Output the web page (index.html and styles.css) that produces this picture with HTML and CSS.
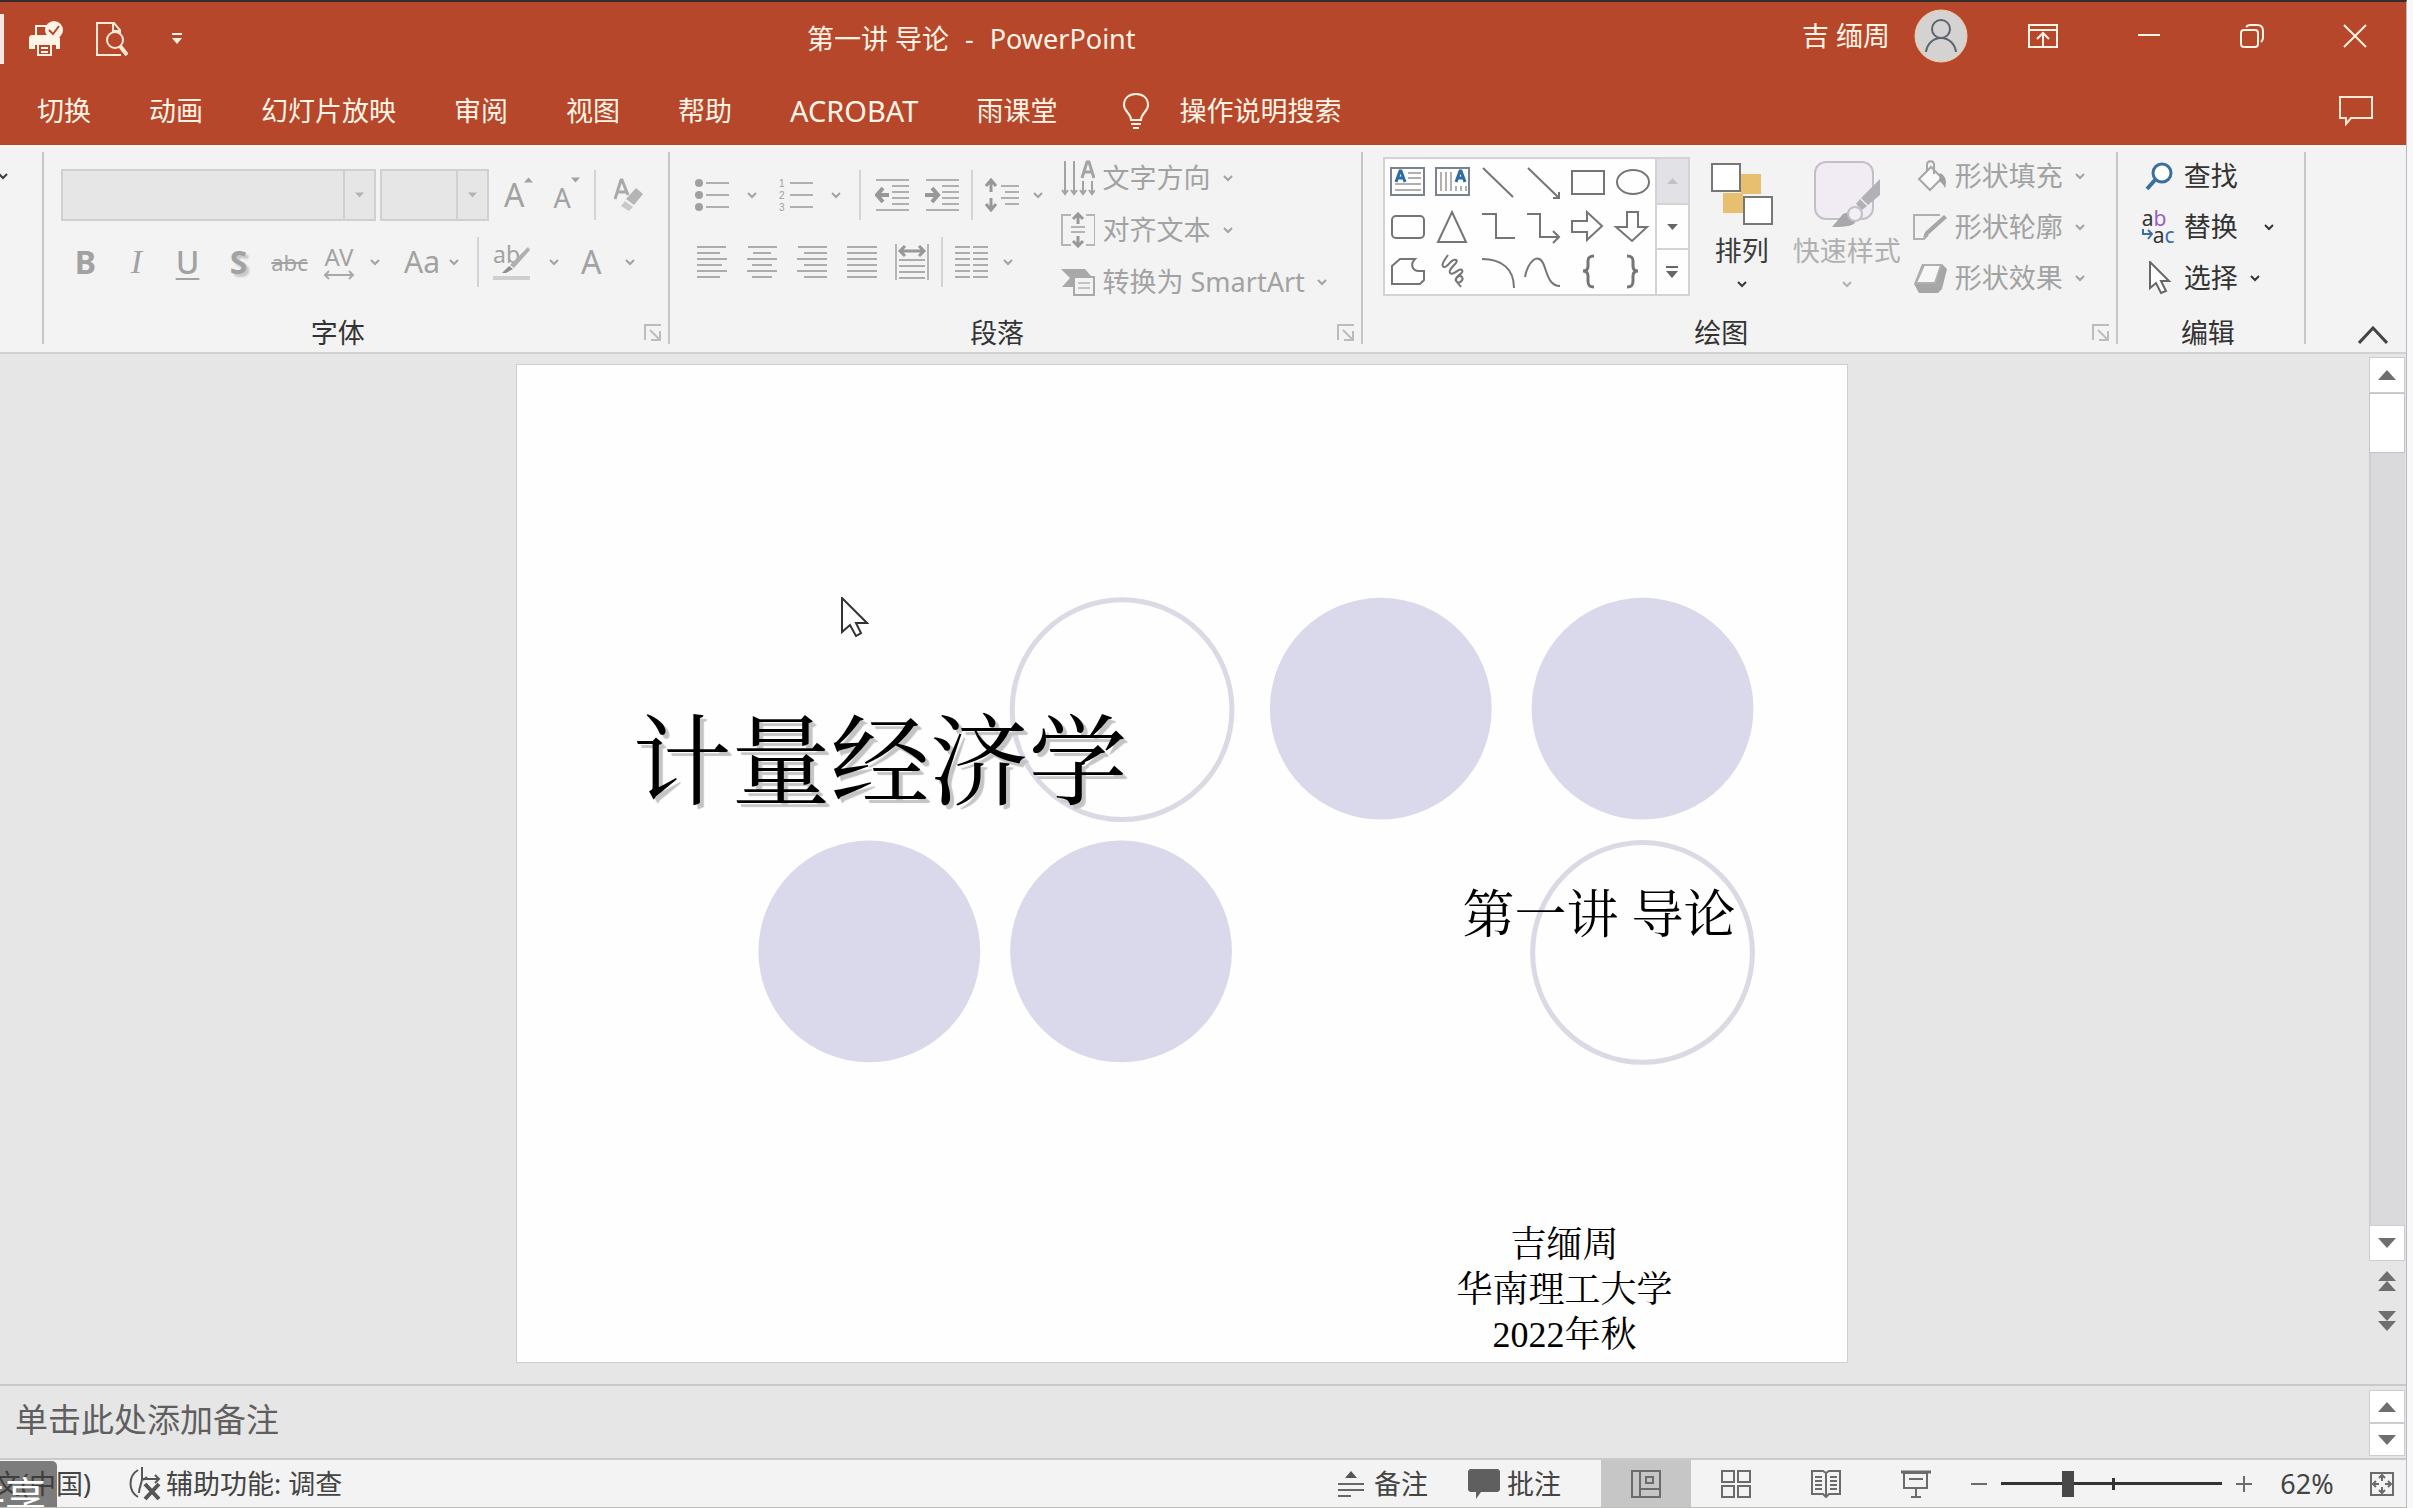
FILE: index.html
```html
<!DOCTYPE html>
<html lang="zh-CN">
<head>
<meta charset="utf-8">
<title>第一讲 导论 - PowerPoint</title>
<link rel="stylesheet" href="styles.css">
</head>
<body>
<svg class="defs" aria-hidden="true">
  <symbol id="chev" viewBox="0 0 10 8"><path d="M1 2l4 4 4-4" fill="none" stroke="currentColor" stroke-width="2"/></symbol>
  <symbol id="up" viewBox="0 0 18 10"><path d="M0 10L9 0l9 10z" fill="currentColor"/></symbol>
  <symbol id="down" viewBox="0 0 18 10"><path d="M0 0h18L9 10z" fill="currentColor"/></symbol>
  <symbol id="launch" viewBox="0 0 18 18"><path d="M1 16V1h16M6 6l9 9M16 7v9H7" fill="none" stroke="currentColor" stroke-width="2"/></symbol>
</svg>
<div class="app">
  <header class="header">
    <div class="titlebar">
      <div class="quick">
        <span class="quick-edge"></span>
        <button class="bare" aria-label="快速打印"><svg width="34" height="36" viewBox="0 0 34 36"><path fill="#fff4e6" d="M0 16l2-2h26l3 3v11h-4v-4H6v4H0z"/><path d="M7 15V5h12M7 15h14" fill="none" stroke="#fff4e6" stroke-width="2"/><path d="M9 23h13v11H9z" fill="#b7472a" stroke="#fff4e6" stroke-width="2"/><path d="M12 27h7M12 31h7" stroke="#fff4e6" stroke-width="2"/><circle cx="25" cy="9" r="9" fill="#fff4e6"/><path d="M20 9l4 4 6-8" fill="none" stroke="#b7472a" stroke-width="2"/></svg></button>
        <button class="bare" aria-label="打印预览"><svg width="32" height="34" viewBox="0 0 32 34" fill="none" stroke="#ffe9d6" stroke-width="2"><path d="M12 33H1V1h17l6 7v3M17 1v8h7M12 33h13"/><circle cx="19" cy="18" r="8"/><path d="M24 24l7 9" stroke-width="4"/></svg></button>
        <button class="bare" aria-label="自定义快速访问工具栏"><svg width="10" height="12" viewBox="0 0 10 12" fill="#fff4e6"><path d="M0 0h10v2H0zM0 5h10l-5 6z"/></svg></button>
      </div>
      <h1 class="doc-title">第一讲 导论<span>-</span>PowerPoint</h1>
      <div class="window">
        <button class="user">吉 缅周<svg width="54" height="54" viewBox="0 0 54 54"><circle cx="27" cy="27" r="26" fill="#d4d3d2" stroke="#f0c9a8" stroke-width="1"/><g fill="none" stroke="#5b6470" stroke-width="2"><circle cx="27" cy="20" r="9"/><path d="M12 43c1-8 7-14 15-14s14 6 15 14"/></g></svg></button>
        <button class="bare win" aria-label="功能区显示选项"><svg width="30" height="24" viewBox="0 0 30 24" fill="none" stroke="#fff4e6" stroke-width="2"><path d="M1 1h28v22H1zM1 6h28M15 22V10M9 15l6-6 6 6"/></svg></button>
        <button class="bare win" aria-label="最小化"><svg width="24" height="24" viewBox="0 0 24 24"><path d="M1 11h22" stroke="#fff4e6" stroke-width="2"/></svg></button>
        <button class="bare win" aria-label="还原"><svg width="24" height="24" viewBox="0 0 24 24" fill="none" stroke="#fff4e6" stroke-width="2"><rect x="1" y="6" width="17" height="17" rx="3"/><path d="M6 3c1-1 2-2 4-2h7c4 0 6 2 6 6v7c0 2-1 3-2 4"/></svg></button>
        <button class="bare win" aria-label="关闭"><svg width="24" height="24" viewBox="0 0 24 24"><path d="M1 1l22 22M23 1L1 23" stroke="#fff4e6" stroke-width="2"/></svg></button>
      </div>
    </div>
    <nav class="tabs">
      <button>切换</button><button>动画</button><button>幻灯片放映</button><button>审阅</button><button>视图</button><button>帮助</button><button class="latin">ACROBAT</button><button>雨课堂</button>
      <label class="tell">
        <svg width="26" height="36" viewBox="0 0 26 36" fill="none" stroke="#fff4e6" stroke-width="2"><path d="M8 27c0-7-7-8-7-15C1 5 6 1 13 1s12 4 12 11c0 7-7 8-7 15zM8 31h10M10 35h6"/></svg>
        <input type="text" placeholder="操作说明搜索" aria-label="操作说明搜索">
      </label>
      <button class="bare comments" aria-label="批注"><svg width="34" height="30" viewBox="0 0 34 30" fill="none" stroke="#ffe9d6" stroke-width="2"><path d="M1 1h32v21H12l-5 6v-6H1z"/></svg></button>
    </nav>
  </header>

  <section class="ribbon">
    <div class="group edge"><svg class="chev dark"><use href="#chev"/></svg></div>

    <div class="group font">
      <div class="body rows">
        <div class="row">
          <span class="combo name"><select disabled aria-label="字体"><option></option></select><svg><use href="#down"/></svg></span>
          <span class="combo size"><select disabled aria-label="字号"><option></option></select><svg><use href="#down"/></svg></span>
          <button class="tool grow" disabled aria-label="增大字号"><span class="big">A</span><svg width="9" height="6"><use href="#up"/></svg></button>
          <button class="tool shrink" disabled aria-label="减小字号"><span>A</span><svg width="9" height="6"><use href="#down"/></svg></button>
          <i class="sep"></i>
          <button class="tool clear" disabled aria-label="清除格式"><svg width="30" height="34" viewBox="0 0 30 34"><path d="M1 21L7 2h1l6 15M4 14h8" fill="none" stroke="#a9a9a9" stroke-width="3"/><path d="M22 10l7 6-9 11-8-6z" fill="#b5b5b5"/><path d="M11 23l8 6-4 4-8-5z" fill="#c9c9c9"/></svg></button>
        </div>
        <div class="row">
          <button class="tool fmt" disabled><b>B</b></button>
          <button class="tool fmt" disabled><i class="ital">I</i></button>
          <button class="tool fmt" disabled><u>U</u></button>
          <button class="tool fmt" disabled><b class="shadow">S</b></button>
          <button class="tool fmt" disabled><s>abc</s></button>
          <button class="tool split kern" disabled><span class="av">AV<svg width="32" height="10" viewBox="0 0 32 10" fill="none" stroke="#a9a9a9" stroke-width="2"><path d="M2 5h28M6 1L2 5l4 4M26 1l4 4-4 4"/></svg></span><svg class="chev"><use href="#chev"/></svg></button>
          <button class="tool split aa" disabled>Aa<svg class="chev"><use href="#chev"/></svg></button>
          <i class="sep"></i>
          <button class="tool split wide" disabled aria-label="突出显示"><span class="hl">ab<svg width="38" height="37" viewBox="0 0 38 37"><path d="M35 2l2 3-16 18-4-3z" fill="#b0b0b0"/><path d="M16 21l4 3-7 4H9z" fill="#8f8f8f"/><path d="M0 31h37v4H0z" fill="#cfcfcf"/></svg></span><svg class="chev"><use href="#chev"/></svg></button>
          <button class="tool split wider" disabled><span class="big">A</span><svg class="chev"><use href="#chev"/></svg></button>
        </div>
      </div>
      <footer><span>字体</span><button class="bare" aria-label="字体设置"><svg width="18" height="18"><use href="#launch"/></svg></button></footer>
    </div>

    <div class="group para">
      <div class="body cols">
        <div class="rows">
          <div class="row">
            <button class="tool split wide" disabled aria-label="项目符号"><svg width="34" height="32" viewBox="0 0 34 32"><g fill="#a0a0a0"><circle cx="4" cy="4" r="4"/><circle cx="4" cy="16" r="4"/><circle cx="4" cy="28" r="4"/></g><path d="M11 4h23M11 16h23M11 28h23" stroke="#b0b0b0" stroke-width="2"/></svg><svg class="chev"><use href="#chev"/></svg></button>
            <button class="tool split wide" disabled aria-label="编号"><svg class="nums" width="34" height="34" viewBox="0 0 34 34"><text x="0" y="9">1</text><text x="0" y="21">2</text><text x="0" y="33">3</text><path d="M11 5h23M11 17h23M11 29h23" stroke="#b0b0b0" stroke-width="2"/></svg><svg class="chev"><use href="#chev"/></svg></button>
            <i class="sep"></i>
            <button class="tool ind" disabled aria-label="减少缩进"><svg width="34" height="34" viewBox="0 0 34 34"><path d="M1 2h33M17 8h17M17 14h17M17 20h17M17 26h17M1 32h33" stroke="#b0b0b0" stroke-width="2"/><path d="M8 10l-6 7 6 7M2 17h12" fill="none" stroke="#989898" stroke-width="4"/></svg></button>
            <button class="tool ind" disabled aria-label="增加缩进"><svg width="34" height="34" viewBox="0 0 34 34"><path d="M1 2h33M17 8h17M17 14h17M17 20h17M17 26h17M1 32h33" stroke="#b0b0b0" stroke-width="2"/><path d="M7 10l6 7-6 7M0 17h12" fill="none" stroke="#989898" stroke-width="4"/></svg></button>
            <i class="sep"></i>
            <button class="tool split" disabled aria-label="行距"><svg width="34" height="34" viewBox="0 0 34 34"><path d="M16 8h18M20 14h14M16 20h18M20 26h14" stroke="#b0b0b0" stroke-width="2"/><path d="M6 2v12M1 8l5-6 5 6M6 20v12M1 26l5 6 5-6" fill="none" stroke="#989898" stroke-width="3"/></svg><svg class="chev"><use href="#chev"/></svg></button>
          </div>
          <div class="row">
            <button class="tool fmt" disabled aria-label="左对齐"><svg width="30" height="32" viewBox="0 0 30 32"><path d="M0 1h29M0 7h23M0 13h30M0 19h25M0 25h30M0 31h23" stroke="#acacac" stroke-width="2"/></svg></button>
            <button class="tool fmt" disabled aria-label="居中"><svg width="30" height="32" viewBox="0 0 30 32"><path d="M1 1h29M6 7h18M0 13h30M5 19h20M0 25h30M5 31h20" stroke="#acacac" stroke-width="2"/></svg></button>
            <button class="tool fmt" disabled aria-label="右对齐"><svg width="30" height="32" viewBox="0 0 30 32"><path d="M1 1h29M7 7h23M0 13h30M7 19h23M0 25h30M7 31h23" stroke="#acacac" stroke-width="2"/></svg></button>
            <button class="tool fmt" disabled aria-label="两端对齐"><svg width="30" height="32" viewBox="0 0 30 32"><path d="M0 1h30M0 7h30M0 13h30M0 19h30M0 25h30M0 31h30" stroke="#acacac" stroke-width="2"/></svg></button>
            <button class="tool fmt" disabled aria-label="分散对齐"><svg width="34" height="36" viewBox="0 0 34 36"><path d="M1 0v36M33 0v36" stroke="#b5b5b5" stroke-width="2"/><path d="M4 16h26M4 22h26M4 28h26M4 34h26" stroke="#acacac" stroke-width="2"/><path d="M10 2L5 7l5 5M24 2l5 5-5 5M6 7h22" fill="none" stroke="#989898" stroke-width="3"/></svg></button>
            <i class="sep near"></i>
            <button class="tool split" disabled aria-label="分栏"><svg width="34" height="32" viewBox="0 0 34 32"><path d="M0 1h15M18 1h15M0 7h15M18 7h15M0 13h15M18 13h15M0 19h15M18 19h15M0 25h15M18 25h15M0 31h15M18 31h15" stroke="#acacac" stroke-width="2"/></svg><svg class="chev"><use href="#chev"/></svg></button>
          </div>
        </div>
        <div class="stack">
          <button class="item" disabled><svg width="34" height="36" viewBox="0 0 34 36"><path d="M4 1v33M1 30l3 4 3-4M13 1v33M10 30l3 4 3-4M22 21v13M19 30l3 4 3-4M31 21v13M28 30l3 4 3-4" fill="none" stroke="#a3a3a3" stroke-width="2"/><path d="M21 18l5-16h2l5 16M22 12h10" fill="none" stroke="#a3a3a3" stroke-width="3"/></svg><span>文字方向</span><svg class="chev"><use href="#chev"/></svg></button>
          <button class="item" disabled><svg width="34" height="36" viewBox="0 0 34 36"><path d="M10 3H1v30h9M25 3h9v30h-9M10 15h14M10 20h14" fill="none" stroke="#b5b5b5" stroke-width="2"/><path d="M17 2v10M12 7l5-5 5 5M17 24v10M12 29l5 5 5-5" fill="none" stroke="#989898" stroke-width="3"/></svg><span>对齐文本</span><svg class="chev"><use href="#chev"/></svg></button>
          <button class="item" disabled><svg width="34" height="28" viewBox="0 0 34 28"><path d="M0 1h24l6 7H15v11H1l8-9z" fill="#a8a8a8"/><path d="M13 9h20v18H13z" fill="#f3f3f3" stroke="#a8a8a8" stroke-width="2"/><path d="M17 15h12M17 20h12" stroke="#c4c4c4" stroke-width="2"/></svg><span>转换为 SmartArt</span><svg class="chev"><use href="#chev"/></svg></button>
        </div>
      </div>
      <footer><span>段落</span><button class="bare" aria-label="段落设置"><svg width="18" height="18"><use href="#launch"/></svg></button></footer>
    </div>

    <div class="group draw">
      <div class="body cols">
        <div class="gallery">
          <div class="shapes">
            <svg viewBox="0 0 45 45"><path d="M6 9h33v27H6z" stroke="#7a8190"/><path d="M23 14h13M23 19h13M10 25h26M10 31h26" stroke="#b0b0b0"/><path d="M11 23l4-11h1l4 11M12 19h7" stroke="#2e6ca4" stroke-width="3"/></svg>
            <svg viewBox="0 0 45 45"><path d="M6 9h33v27H6z" stroke="#7a8190"/><path d="M11 13v19M16 13v19M21 13v19M26 27v5M31 27v5M36 27v5" stroke="#b0b0b0"/><path d="M26 23l4-11h1l4 11M27 19h7" stroke="#2e6ca4" stroke-width="3"/></svg>
            <svg viewBox="0 0 45 45"><path d="M8 9l30 29"/></svg>
            <svg viewBox="0 0 45 45"><path d="M8 9l31 30M39 33v6h-6"/></svg>
            <svg viewBox="0 0 45 45"><path d="M7 12h32v23H7z"/></svg>
            <svg viewBox="0 0 45 45"><ellipse cx="23" cy="23" rx="16" ry="12"/></svg>
            <svg viewBox="0 0 45 45"><rect x="7" y="12" width="32" height="22" rx="4"/></svg>
            <svg viewBox="0 0 45 45"><path d="M22 8l14 30H8z"/></svg>
            <svg viewBox="0 0 45 45"><path d="M7 10h14v24h19"/></svg>
            <svg viewBox="0 0 45 45"><path d="M7 10h13v23h19M33 27l6 6-6 6"/></svg>
            <svg viewBox="0 0 45 45"><path d="M7 17h15V8l15 14-15 14v-8H7z"/></svg>
            <svg viewBox="0 0 45 45"><path d="M17 8h11v15h9L22 37 6 23h11z"/></svg>
            <svg viewBox="0 0 45 45"><path d="M7 17l8-7h15c-5 5-3 12 4 12h5v9l-4 4H7z"/></svg>
            <svg viewBox="0 0 45 45"><path d="M18 6c-3 4-8 11-4 12s7-9 12-7c4 2-9 9-6 13s9-6 12-3-9 7-6 11 8-1 6-4-8 1-5 5l4 5"/></svg>
            <svg viewBox="0 0 45 45"><path d="M7 10c20 0 32 10 32 29"/></svg>
            <svg viewBox="0 0 45 45"><path d="M5 28c3-16 13-24 18-14 4 8 5 23 17 23"/></svg>
            <svg viewBox="0 0 45 45"><path d="M29 7c-5 0-6 2-6 5v5c0 4-2 5-5 5 3 0 5 1 5 5v5c0 4 1 6 6 6" stroke-width="3"/></svg>
            <svg viewBox="0 0 45 45"><path d="M17 7c5 0 6 2 6 5v5c0 4 2 5 5 5-3 0-5 1-5 5v5c0 4-1 6-6 6" stroke-width="3"/></svg>
          </div>
          <div class="gal-scroll">
            <button disabled aria-label="上一行"><svg width="11" height="6"><use href="#up"/></svg></button>
            <button aria-label="下一行"><svg width="11" height="6"><use href="#down"/></svg></button>
            <button aria-label="其他"><svg width="12" height="12" viewBox="0 0 12 12"><path d="M0 0h12v2H0zM0 5h12l-6 7z" fill="currentColor"/></svg></button>
          </div>
        </div>
        <button class="large arrange"><svg width="62" height="66" viewBox="0 0 62 66"><path d="M30 13h20v20H30zM12 32h20v20H12z" fill="#e7bf6e"/><g fill="#fff" stroke="#777" stroke-width="2"><path d="M1 3h28v27H1zM33 36h28v27H33z"/></g></svg><span>排列</span><svg class="chev"><use href="#chev"/></svg></button>
        <button class="large styles" disabled><svg width="68" height="66" viewBox="0 0 68 66"><rect x="2" y="1" width="58" height="57" rx="11" fill="#f1ecf4" stroke="#c3bfc8" stroke-width="2"/><path d="M67 18v16L55 44l-7-7zM47 38l7 7-5 4-6-6z" fill="#b3b1b5"/><path d="M19 66l11-13c6-4 15 0 13 6-1 6-8 7-24 7z" fill="#a9a7ab"/><circle cx="42" cy="53" r="7" fill="#f1f0f2" stroke="#c3bfc8" stroke-width="2"/></svg><span>快速样式</span><svg class="chev"><use href="#chev"/></svg></button>
        <div class="stack tight">
          <button class="item" disabled><svg width="34" height="32" viewBox="0 0 34 32"><path d="M18 7l11 11-12 12L6 19z" fill="#fafafa" stroke="#a6a6a6" stroke-width="2"/><path d="M14 11V5c0-5 7-5 7 0v9" fill="none" stroke="#a6a6a6" stroke-width="2"/><path d="M27 13c6 3 7 8 5 15-2-4-4-6-6-7z" fill="#a0a0a0"/></svg><span>形状填充</span><svg class="chev"><use href="#chev"/></svg></button>
          <button class="item" disabled><svg width="34" height="32" viewBox="0 0 34 32"><path d="M27 4H1v24h10l4-4" fill="none" stroke="#b0b0b0" stroke-width="2"/><path d="M31 4l3 3-19 17-5 3 2-6z" fill="#a6a6a6"/></svg><span>形状轮廓</span><svg class="chev"><use href="#chev"/></svg></button>
          <button class="item" disabled><svg width="34" height="32" viewBox="0 0 34 32"><path d="M1 22L9 2h20l5 5-5 20-4 4H6z" fill="#a6a6a6"/><path d="M11 3h17l-6 18H3z" fill="#f7f7f7" stroke="#b0b0b0" stroke-width="2"/></svg><span>形状效果</span><svg class="chev"><use href="#chev"/></svg></button>
        </div>
      </div>
      <footer><span>绘图</span><button class="bare" aria-label="形状设置"><svg width="18" height="18"><use href="#launch"/></svg></button></footer>
    </div>

    <div class="group edit">
      <div class="body stack tight">
        <button class="item"><svg width="34" height="30" viewBox="0 0 34 30"><circle cx="20" cy="12" r="9" fill="#fff" stroke="#3a6f9f" stroke-width="3"/><path d="M13 19L5 28" stroke="#3a6f9f" stroke-width="4"/></svg><span>查找</span></button>
        <button class="item replace"><span class="rep"><span>a<em>b</em></span><span><svg width="11" height="12" viewBox="0 0 11 12"><path d="M1 0v5h8M6 1l4 4-4 5" fill="none" stroke="#3a6f9f" stroke-width="2"/></svg>a<q>c</q></span></span><span>替换</span><svg class="chev"><use href="#chev"/></svg></button>
        <button class="item"><svg width="34" height="34" viewBox="0 0 34 34"><path d="M8 1v26l6-5 5 10 5-2-5-10h8z" fill="#fff" stroke="#666" stroke-width="2"/></svg><span>选择</span><svg class="chev"><use href="#chev"/></svg></button>
      </div>
      <footer><span>编辑</span></footer>
    </div>
    <div class="group last"><button class="bare" aria-label="折叠功能区"><svg width="30" height="18" viewBox="0 0 30 18"><path d="M1 17L15 2l14 15" fill="none" stroke="#444" stroke-width="3"/></svg></button></div>
  </section>

  <main class="work">
    <div class="stage">
      <article class="slide">
        <svg class="art" viewBox="0 0 1330 998">
          <g fill="#dad8eb"><circle cx="864" cy="344" r="111"/><circle cx="1126" cy="344" r="111"/><circle cx="352" cy="587" r="111"/><circle cx="604" cy="587" r="111"/></g>
          <g fill="none" stroke="#dad9e4" stroke-width="5"><circle cx="605" cy="345" r="110"/><circle cx="1126" cy="588" r="110"/></g>
        </svg>
        <h2>计量经济学</h2>
        <p class="sub">第一讲 导论</p>
        <p class="by">吉缅周<br>华南理工大学<br>2022年秋</p>
        <svg class="pointer" width="28" height="40" viewBox="0 0 28 40"><path d="M1 1v34l8-7 6 11 5-3-5-10h11z" fill="#fff" stroke="#333" stroke-width="2"/></svg>
      </article>
    </div>
    <div class="vscroll">
      <button aria-label="向上滚动"><svg width="18" height="10"><use href="#up"/></svg></button>
      <div class="track"><div class="thumb"></div></div>
      <button aria-label="向下滚动"><svg width="18" height="10"><use href="#down"/></svg></button>
      <button class="page" aria-label="上一张幻灯片"><svg width="18" height="10"><use href="#up"/></svg><svg width="18" height="10"><use href="#up"/></svg></button>
      <button class="page" aria-label="下一张幻灯片"><svg width="18" height="10"><use href="#down"/></svg><svg width="18" height="10"><use href="#down"/></svg></button>
    </div>
  </main>

  <section class="notes">
    <textarea rows="1" placeholder="单击此处添加备注" aria-label="备注"></textarea>
    <div class="nscroll">
      <button aria-label="备注向上滚动"><svg width="18" height="10"><use href="#up"/></svg></button>
      <button aria-label="备注向下滚动"><svg width="18" height="10"><use href="#down"/></svg></button>
    </div>
  </section>

  <footer class="status">
    <button class="lang">中文(中国)</button>
    <button class="access"><svg width="32" height="33" viewBox="0 0 32 33" fill="none" stroke="#555" stroke-width="2"><path d="M9 3C-1 9-1 24 9 30M13 0v12c0 4-3 8-3 14M13 12h17M26 8l4 4-4 4M18 10l-4 3"/><path d="M16 17l14 15M30 17L16 32" stroke-width="4"/></svg>辅助功能: 调查</button>
    <button class="toggle notes-toggle"><svg width="28" height="26" viewBox="0 0 28 26"><path d="M8 7l6-7 6 7z" fill="#555"/><path d="M1 13h26M1 19h26M1 25h13" stroke="#666" stroke-width="2"/></svg>备注</button>
    <button class="toggle cm-toggle"><svg width="32" height="30" viewBox="0 0 32 30"><path d="M2 0h28l2 2v19l-2 2H13l-5 7v-7H2l-2-2V2z" fill="#5f5f5f"/></svg>批注</button>
    <div class="views">
      <button class="on" aria-label="普通视图"><svg width="30" height="28" viewBox="0 0 30 28"><path d="M1 1h28v26H1zM9 1v26M9 19h20M15 7h7v6h-7z"/></svg></button>
      <button aria-label="幻灯片浏览"><svg width="30" height="28" viewBox="0 0 30 28"><path d="M1 1h12v11H1zM17 1h12v11H17zM1 16h12v11H1zM17 16h12v11H17z"/></svg></button>
      <button aria-label="阅读视图"><svg width="30" height="28" viewBox="0 0 30 28"><path d="M15 3L12 1H1v23h11l3 3 3-3h11V1H18zv24M4 7h7M4 11h7M4 15h7M4 19h7M19 7h7M19 11h7M19 15h7M19 19h7"/></svg></button>
      <button aria-label="幻灯片放映"><svg width="30" height="28" viewBox="0 0 30 28"><path d="M0 2h30" stroke-width="3"/><path d="M3 3h23v15H3zM8 9h14M15 18v9M10 27h10"/></svg></button>
    </div>
    <div class="zoom">
      <button aria-label="缩小"><svg width="18" height="18" viewBox="0 0 18 18"><path d="M1 9h16"/></svg></button>
      <span class="range"><input type="range" min="0" max="100" value="29" aria-label="缩放"></span>
      <button aria-label="放大"><svg width="18" height="18" viewBox="0 0 18 18"><path d="M1 9h16M9 1v16"/></svg></button>
      <button class="pct">62%</button>
      <button aria-label="适应窗口"><svg width="24" height="24" viewBox="0 0 24 24"><path d="M1 1h22v22H1zM12 3v6M9 6l3-3 3 3M12 21v-6M9 18l3 3 3-3M3 12h6M6 9l-3 3 3 3M21 12h-6M18 9l3 3-3 3"/></svg></button>
    </div>
  </footer>
  <div class="share">共享</div>
</div>
</body>
</html>
```
FILE: styles.css
```css
* { box-sizing: border-box; }
body {
  margin: 0;
  padding-right: 6px;
  background: #f8f8fa;
  color: #3b3b3b;
  font: 27px/36px "Noto Sans", "Noto Sans CJK SC", sans-serif;
}
button, input, textarea, select { font: inherit; color: inherit; border: 0; padding: 0; margin: 0; background: none; border-radius: 0; }
button { display: flex; align-items: center; justify-content: center; white-space: pre; }
svg { display: block; flex: none; }
.defs { display: none; }
.app { position: relative; display: flex; flex-direction: column; height: 100vh; overflow: hidden; border-top: 2px solid #352e2c; border-right: 1px solid #b9b9bd; border-bottom: 1px solid #bdbdb8; }

/* title bar and tabs */
.header { background: #b7472a; color: #fff4e6; }
.titlebar { display: grid; grid-template-columns: 807px auto 1fr; align-items: center; height: 74px; }
.quick { display: flex; align-items: center; gap: 33px; }
.quick-edge { width: 4px; height: 50px; background: #f3e9e4; margin-right: -8px; }
.quick button:last-child { margin-left: 11px; }
.doc-title { margin: 0; font-size: 27px; line-height: 36px; font-weight: 400; white-space: pre; }
.doc-title span { margin: 0 16px; }
.window { display: flex; justify-content: flex-end; align-items: center; padding: 0 39px 6px 0; gap: 79px; }
.user { gap: 24px; margin-right: -19px; }
.tabs { display: flex; align-items: center; height: 69px; padding: 0 33px 0 8px; }
.tabs > button:not(.bare) { padding: 0 29px; height: 69px; }
.tabs .latin { font-size: 29px; }
.tell { display: flex; align-items: center; gap: 30px; margin-left: 37px; }
.tell input { width: 180px; height: 36px; }
.tell input::placeholder { color: #fff4e6; opacity: 1; }
.comments { margin-left: auto; }

/* ribbon */
.ribbon { display: flex; height: 209px; padding: 7px 0 8px; background: #f3f3f3; border-bottom: 2px solid #d2d2d2; }
.group { display: flex; flex-direction: column; border-right: 2px solid #c6c6c6; min-width: 0; }
.group footer { display: flex; align-items: center; height: 22px; margin-top: auto; padding-right: 6px; color: #333; }
.group footer span { flex: 1; text-align: center; line-height: 36px; }
.group footer .bare { width: 30px; justify-content: flex-end; color: #bcbcbc; }
.chev { width: 10px; height: 8px; }
.edge { width: 44px; padding-top: 20px; }
.edge .chev { margin-left: -2px; }
.font { flex: 626 0 0; }
.para { flex: 694 0 0; }
.draw { flex: 756 0 0; }
.edit { flex: 187 0 0; }
.last { width: 100px; border: 0; justify-content: flex-end; align-items: flex-end; padding-right: 18px; }
.body { color: #a2a2a2; }
.cols { display: flex; }
.rows { display: flex; flex-direction: column; gap: 12px; padding-top: 15px; }
.row { display: flex; align-items: center; height: 56px; }
.row + .row { margin-top: -1px; }
.tool { height: 48px; position: relative; }
.fmt { width: 50px; }
.font .fmt { width: 51px; }
.fmt b, .fmt u { font-size: 32px; }
.ital { font: italic 34px "Liberation Serif", serif; }
.shadow { text-shadow: 3px 3px 2px #c8c8c8; }
.fmt s { font-size: 22px; }
.fmt u { font-weight: 500; text-underline-offset: 4px; text-decoration-thickness: 2px; }
.sep { width: 2px; height: 50px; background: #d4d4d4; margin: 0 14px; }
.sep.near { margin: 0 12px 0 4px; }
.split { gap: 14px; margin-right: 14px; }
.kern { margin-left: 7px; }
.split.aa { gap: 9px; margin: 0 4px 0 10px; font-size: 30px; }
.split.wide { gap: 18px; margin-right: 22px; }
.split.wider { gap: 24px; }
.para .wide + .sep { margin-left: -4px; }
.big { font-size: 32px; }
.av { display: flex; flex-direction: column; align-items: center; width: 34px; font-size: 24px; line-height: 26px; }
.hl { position: relative; width: 38px; height: 40px; font-size: 23px; line-height: 24px; text-align: left; }
.hl svg { position: absolute; left: 0; top: 3px; }
.font .row:first-child { padding-left: 17px; }
.font .row + .row { padding-left: 16px; }
.combo { display: flex; align-items: center; height: 52px; border: 2px solid #d0d0d0; background: #e6e6e6; }
.combo select { appearance: none; height: 48px; flex: 1; border-right: 2px solid #d0d0d0; opacity: 1; }
.combo svg { width: 9px; height: 6px; margin: 0 10px; color: #b3b3b3; }
.combo.name { width: 315px; margin-right: 4px; }
.combo.size { width: 109px; }
.grow { margin: 0 20px 0 15px; }
.grow svg, .shrink svg { align-self: flex-start; margin-top: 6px; }
.shrink span { padding-top: 6px; }
.clear { margin-left: 4px; }
.ind { width: 50px; }
.nums { fill: #a0a0a0; font: 10px "Liberation Sans", sans-serif; overflow: visible; }
.para .rows { width: 391px; padding-left: 25px; }
.para .rows .row + .row { margin-left: -8px; }
.sep + .ind { margin-left: -8px; }
.ind + .sep { margin-left: 4px; margin-right: 12px; }
.stack { display: flex; flex-direction: column; }
.item { justify-content: flex-start; gap: 8px; height: 52px; }
.item .chev { margin-left: 4px; }
.stack.tight { margin-top: -2px; }
.stack.tight .item { height: 51px; }

.draw .body { padding-left: 20px; }
.gallery { display: flex; width: 307px; height: 139px; margin-top: 5px; border: 2px solid #d3d3d3; background: #fefefe; }
.shapes { display: grid; grid-template-columns: repeat(6, 45px); grid-template-rows: repeat(3, 45px); flex: 1; }
.shapes svg { width: 45px; height: 45px; fill: none; stroke: #757575; stroke-width: 2; }
.gal-scroll { display: flex; flex-direction: column; width: 34px; border-left: 2px solid #d3d3d3; color: #666; }
.gal-scroll button { flex: 1; }
.gal-scroll button + button { border-top: 2px solid #d3d3d3; }
.gal-scroll button:disabled { background: #e2e1e5; color: #c2c2c6; }
.large { flex-direction: column; justify-content: flex-start; height: 150px; padding-top: 9px; }
.large span { margin-top: 6px; }
.large .chev { margin-top: 11px; }
.arrange { width: 62px; margin-left: 21px; color: #3b3b3b; }
.styles { width: 108px; margin: 0 12px 0 20px; color: #b0b0b0; }
.edit .body { padding-left: 24px; color: #333; }
.rep { width: 34px; font-size: 21px; line-height: 17px; }
.rep > span { display: flex; align-items: center; }
.rep em { font-style: normal; color: #9a5fc0; }
.rep q { quotes: none; color: #3a6f9f; }
.replace .chev { margin-left: 18px; }

/* slide area */
.work { display: flex; flex: 1; min-height: 0; background: #e6e6e6; }
.stage { flex: 1; display: flex; justify-content: center; padding: 10px 5px 21px 0; min-width: 0; }
.slide { position: relative; height: 100%; aspect-ratio: 4 / 3; background: #fefefe; border: 1px solid #cfcfcf; color: #000; font-family: "Liberation Serif", "Noto Serif CJK SC", "Noto Sans CJK SC", serif; }
.art { position: absolute; inset: 0; width: 100%; height: 100%; }
.slide h2, .slide p { position: absolute; margin: 0; white-space: nowrap; }
.slide h2 { left: 116px; top: 34%; font-size: 99px; line-height: 120px; font-weight: 400; text-shadow: 4px 4px 1px #c4c4c4; }
.sub { right: 111px; top: 52%; font-size: 52px; line-height: 66px; }
.by { right: 132px; bottom: 4px; width: 300px; font-size: 36px; line-height: 45px; text-align: center; }
.pointer { position: absolute; left: 324px; top: 232px; }
.vscroll { width: 38px; padding: 3px 1px 0; display: flex; flex-direction: column; color: #6e6e6e; }
.vscroll button { height: 36px; background: #fff; border: 1px solid #cdcdcd; }
.track { flex: 1; background: #dadadc; border-left: 2px solid #cdcdcf; }
.thumb { height: 60px; margin-left: -2px; background: #fff; border: 1px solid #c4c4c4; }
.vscroll .page { flex-direction: column; height: 40px; background: none; border: 0; }
.vscroll .page:last-child { margin-bottom: 43px; }

/* notes */
.notes { display: flex; height: 74px; background: #e6e6e6; border-top: 2px solid #c9c9c9; }
.notes textarea { flex: 1; resize: none; overflow: hidden; padding: 12px 15px; font-size: 33px; line-height: 44px; outline: 0; }
.notes textarea::placeholder { color: #5f5f5f; opacity: 1; }
.nscroll { width: 38px; padding: 4px 1px 0; color: #6e6e6e; }
.nscroll button { width: 36px; height: 33px; background: #fff; border: 1px solid #cdcdcd; }

/* status bar */
.status { display: flex; align-items: center; height: 49px; background: #f3f3f3; border-top: 2px solid #cacaca; color: #444; }
.status button { height: 47px; }
.lang { width: 91px; justify-content: flex-end; overflow: hidden; }
.access { margin-left: 38px; gap: 5px; }
.toggle { gap: 9px; }
.notes-toggle { margin-left: auto; }
.cm-toggle { margin: 0 40px; gap: 7px; }
.views { display: flex; }
.views button { width: 90px; }
.views svg, .zoom svg { fill: none; stroke: #6b6b6b; stroke-width: 2; }
.views .on { background: #c6c6c6; }
.zoom { display: flex; align-items: center; gap: 13px; padding: 0 12px 0 9px; }
.range { position: relative; display: flex; width: 221px; height: 26px; }
.range::before { content: ""; position: absolute; left: 50%; top: 7px; width: 3px; height: 12px; background: #333; }
.range input { position: relative; appearance: none; width: 100%; height: 26px; }
.range input::-webkit-slider-runnable-track { height: 26px; background: linear-gradient(#333, #333) center / 100% 3px no-repeat; }
.range input::-webkit-slider-thumb { appearance: none; width: 12px; height: 26px; background: #484848; }
.pct { width: 58px; margin: 0 21px 0 12px; }
.share { position: absolute; left: 0; bottom: 0; width: 57px; height: 46px; padding: 8px 11px 0 0; display: flex; justify-content: flex-end; overflow: hidden; border-radius: 0 5px 0 0; background: rgb(60 60 60 / 65%); color: #fff; font-size: 41px; line-height: 54px; white-space: nowrap; }
```
